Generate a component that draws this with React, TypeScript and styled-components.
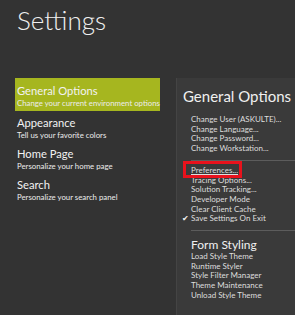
import React from "react";
import styled, { createGlobalStyle } from "styled-components";

const Global = createGlobalStyle`
  html, body {
    margin: 0;
    padding: 0;
    background: #333333;
  }
  body {
    font-family: Lato, "Open Sans", "Noto Sans", sans-serif;
    color: #e6e6e6;
  }
`;

const navItems = [
  { title: "General Options", sub: "Change your current environment options" },
  { title: "Appearance", sub: "Tell us your favorite colors" },
  { title: "Home Page", sub: "Personalize your home page" },
  { title: "Search", sub: "Personalize your search panel" },
];

const Page = styled.div`
  width: 295px;
  height: 315px;
  overflow: hidden;
  background: #333333;
  display: flex;
  flex-direction: column;
`;

const Title = styled.h1`
  margin: 0;
  padding: 5px 0 0 17px;
  height: 71px;
  box-sizing: border-box;
  font-size: 26px;
  line-height: 30px;
  font-weight: 300;
  color: #f0f0f0;
`;

const Main = styled.div`
  flex: 1;
  display: flex;
  gap: 16px;
  padding: 7px 0 0 15px;
  min-height: 0;
`;

const Nav = styled.nav`
  width: 145px;
  display: flex;
  flex-direction: column;
`;

const NavItem = styled.div<{ $active?: boolean }>`
  display: flex;
  flex-direction: column;
  height: ${(p) => (p.$active ? "33px" : "31px")};
  box-sizing: border-box;
  padding: ${(p) => (p.$active ? "5px 2px 0" : "3px 2px 0")};
  margin-bottom: ${(p) => (p.$active ? "1px" : "0")};
  background: ${(p) => (p.$active ? "#a6b61f" : "transparent")};
  color: #f2f2f2;
`;

const NavTitle = styled.span`
  font-size: 11.2px;
  line-height: 15px;
`;

const NavSub = styled.span`
  font-size: 7.8px;
  line-height: 10px;
  white-space: nowrap;
  color: #ececec;
`;

const Panel = styled.section`
  flex: 1;
  background: #3a3a3a;
  border-left: 1px solid #444444;
  padding: 8px 0 0 6px;
  display: flex;
  flex-direction: column;
  min-width: 0;
`;

const Heading = styled.h2<{ $small?: boolean }>`
  margin: ${(p) => (p.$small ? "0 0 0 8px" : "0 0 9px 0")};
  font-weight: 400;
  font-size: ${(p) => (p.$small ? "12px" : "15px")};
  line-height: ${(p) => (p.$small ? "14px" : "20px")};
  color: #f0f0f0;
  white-space: nowrap;
`;

const List = styled.div`
  display: flex;
  flex-direction: column;
  padding-left: 8px;
`;

const Row = styled.div<{ $link?: boolean }>`
  position: relative;
  font-size: 8px;
  line-height: 9.7px;
  white-space: nowrap;
  color: #dedede;
  text-decoration: ${(p) => (p.$link ? "underline" : "none")};
`;

const Highlight = styled.span`
  position: absolute;
  left: -8px;
  top: -5px;
  width: 59px;
  height: 17px;
  box-sizing: border-box;
  border: 3px solid #e8121c;
  z-index: 2;
`;

const Check = styled.span`
  position: absolute;
  left: -9px;
  top: 0;
  font-size: 8px;
  color: #f2f2f2;
`;

const Divider = styled.hr<{ $after?: number }>`
  border: none;
  height: 1px;
  background: #5c5c5c;
  margin: 6px 0 ${(p) => p.$after ?? 5}px 8px;
`;

const groupOne = [
  "Change User (ASKULTE)...",
  "Change Language...",
  "Change Password...",
  "Change Workstation...",
];

const groupTwo = [
  "Tracing Options...",
  "Solution Tracking...",
  "Developer Mode",
  "Clear Client Cache",
];

const groupThree = [
  "Load Style Theme",
  "Runtime Styler",
  "Style Filter Manager",
  "Theme Maintenance",
  "Unload Style Theme",
];

export default function App() {
  return (
    <Page>
      <Global />
      <Title>Settings</Title>
      <Main>
        <Nav>
          {navItems.map((item, i) => (
            <NavItem key={item.title} $active={i === 0}>
              <NavTitle>{item.title}</NavTitle>
              <NavSub>{item.sub}</NavSub>
            </NavItem>
          ))}
        </Nav>
        <Panel>
          <Heading>General Options</Heading>
          <List>
            {groupOne.map((t) => (
              <Row key={t}>{t}</Row>
            ))}
          </List>
          <Divider />
          <List>
            <Row $link>
              Preferences...
              <Highlight />
            </Row>
            {groupTwo.map((t) => (
              <Row key={t}>{t}</Row>
            ))}
            <Row>
              <Check>✔</Check>
              Save Settings On Exit
            </Row>
          </List>
          <Divider $after={7} />
          <Heading $small>Form Styling</Heading>
          <List>
            {groupThree.map((t) => (
              <Row key={t}>{t}</Row>
            ))}
          </List>
        </Panel>
      </Main>
    </Page>
  );
}
